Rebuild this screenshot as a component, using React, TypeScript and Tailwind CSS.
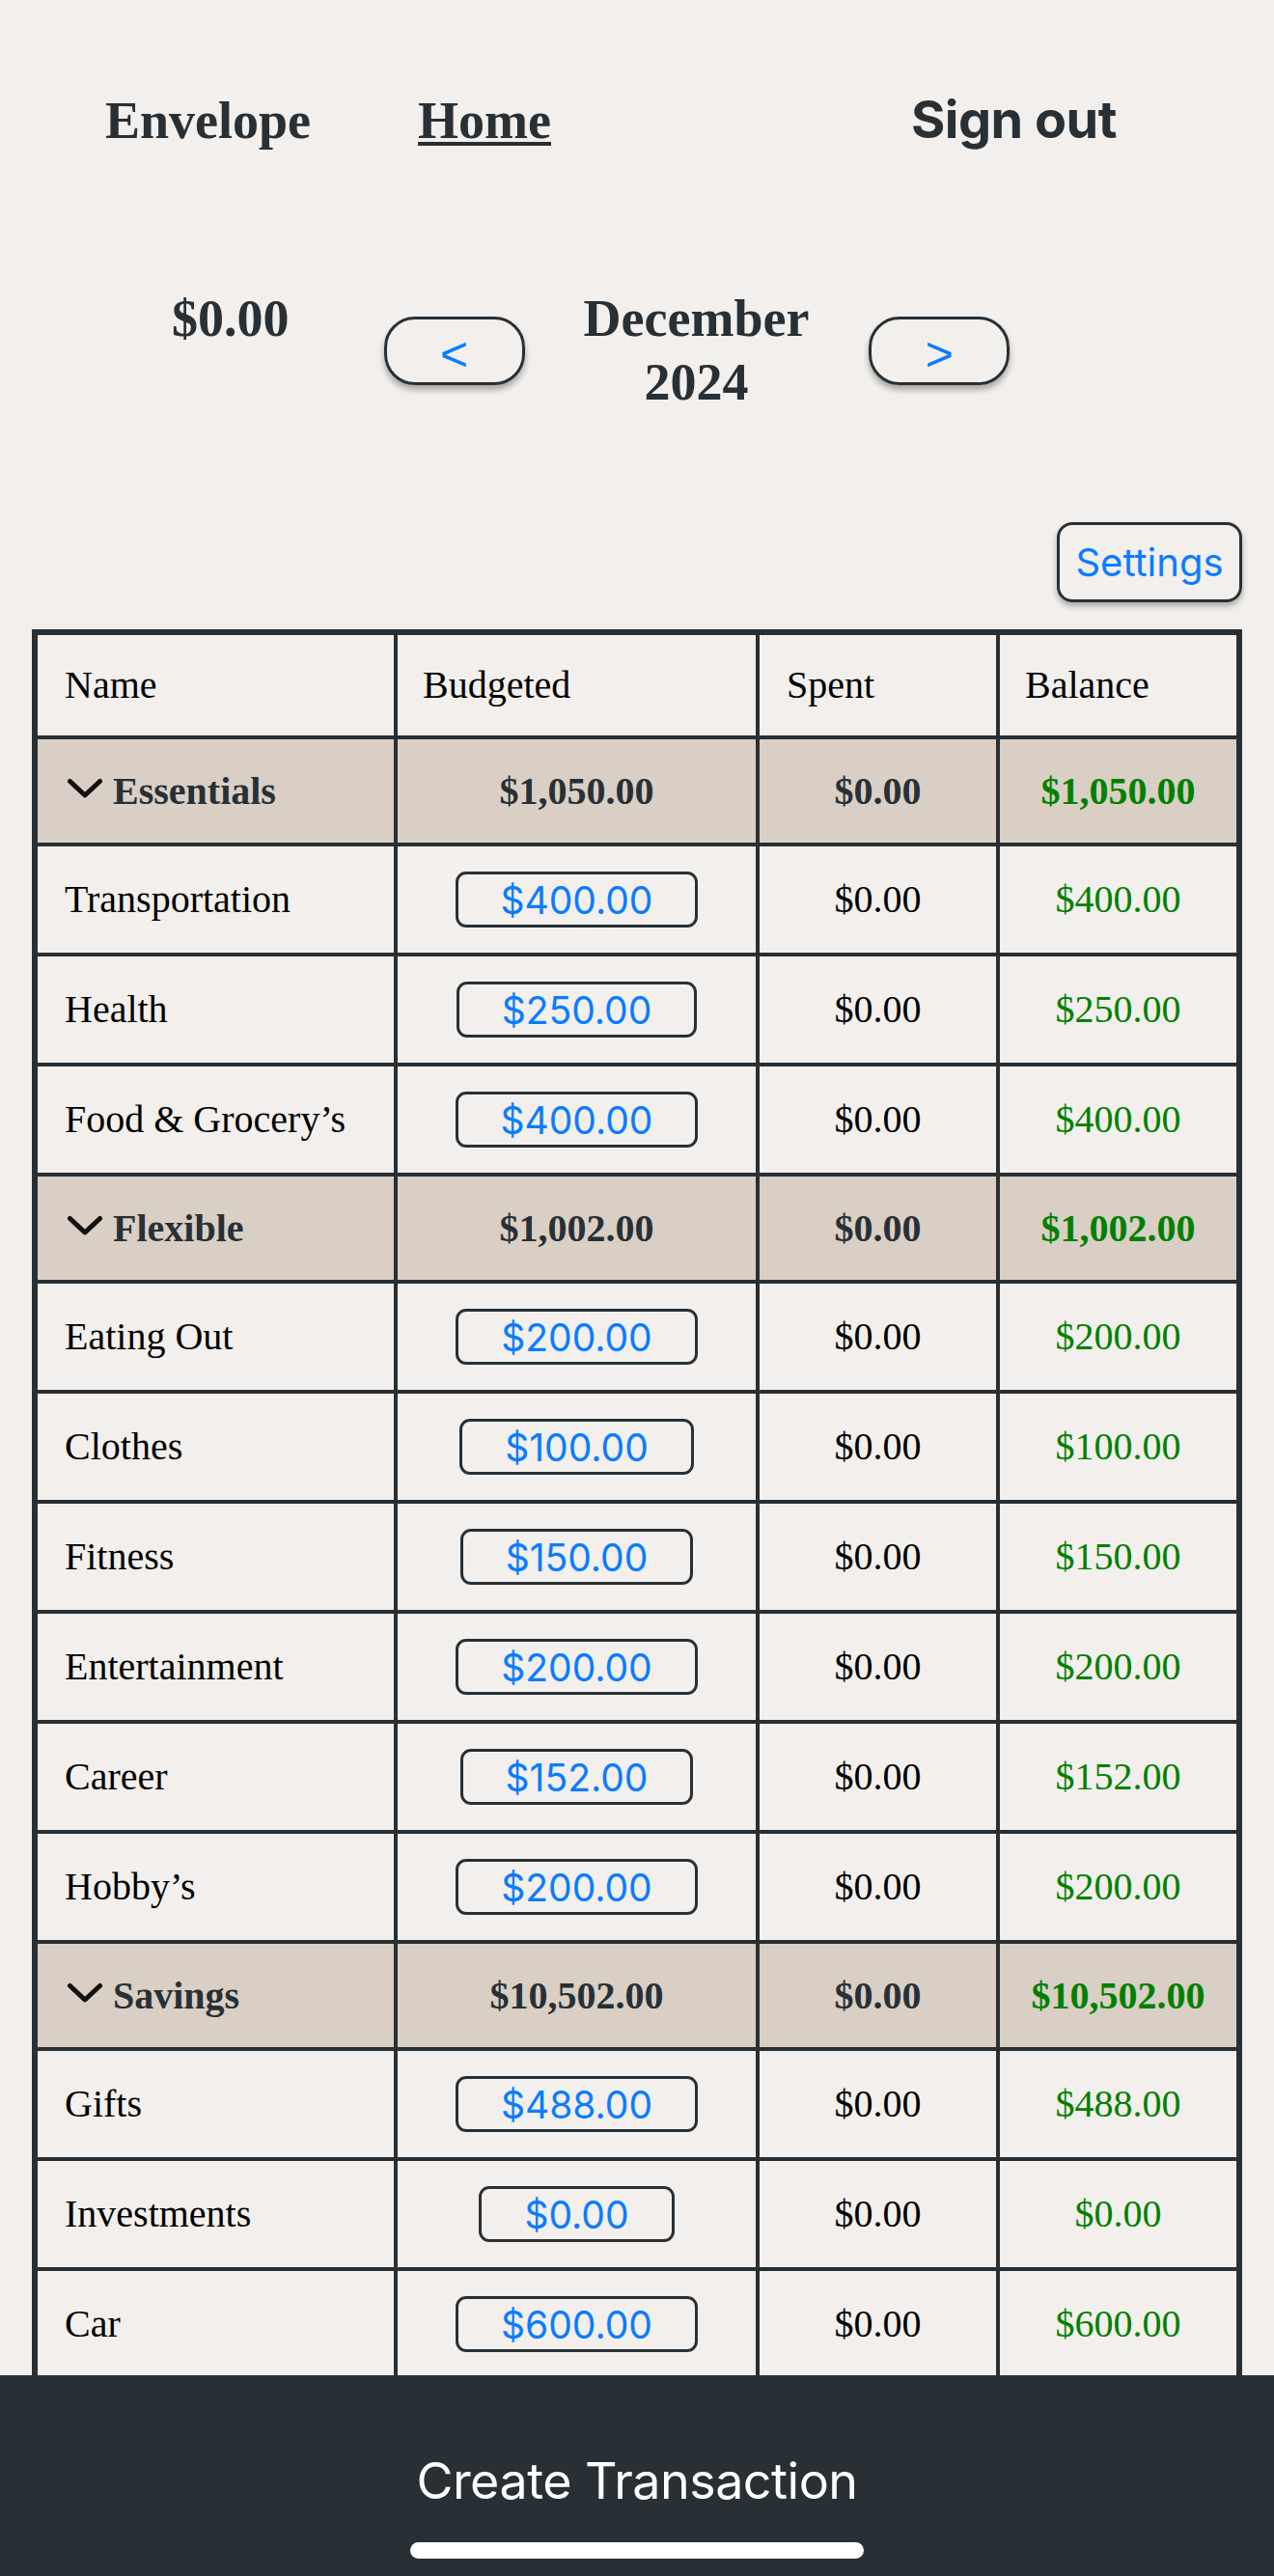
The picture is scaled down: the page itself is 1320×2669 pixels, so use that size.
import React from 'react';

type Item = { name: string; budgeted: string };
type Group = { name: string; budgeted: string; spent: string; balance: string; items: Item[] };

const groups: Group[] = [
    {
        name: 'Essentials', budgeted: '$1,050.00', spent: '$0.00', balance: '$1,050.00',
        items: [
            { name: 'Transportation', budgeted: '$400.00' },
            { name: 'Health', budgeted: '$250.00' },
            { name: 'Food & Grocery\u2019s', budgeted: '$400.00' },
        ],
    },
    {
        name: 'Flexible', budgeted: '$1,002.00', spent: '$0.00', balance: '$1,002.00',
        items: [
            { name: 'Eating Out', budgeted: '$200.00' },
            { name: 'Clothes', budgeted: '$100.00' },
            { name: 'Fitness', budgeted: '$150.00' },
            { name: 'Entertainment', budgeted: '$200.00' },
            { name: 'Career', budgeted: '$152.00' },
            { name: 'Hobby\u2019s', budgeted: '$200.00' },
        ],
    },
    {
        name: 'Savings', budgeted: '$10,502.00', spent: '$0.00', balance: '$10,502.00',
        items: [
            { name: 'Gifts', budgeted: '$488.00' },
            { name: 'Investments', budgeted: '$0.00' },
            { name: 'Car', budgeted: '$600.00' },
        ],
    },
];

const Chevron = () => (
    <svg width="38" height="22" viewBox="0 0 38 22" className="mr-[10px] shrink-0 -mt-[6px]">
        <path d="M3.5 3.5 L19 18 L34.5 3.5" fill="none" stroke="#111" strokeWidth="5" strokeLinecap="round" strokeLinejoin="round" />
    </svg>
);

const GroupRow: React.FC<{ group: Group }> = ({ group }) => (
    <>
        <div className="h-[107px] bg-[#dacfc4] flex items-center pl-[30px] font-bold text-[#283036]">
            <Chevron />
            {group.name}
        </div>
        <div className="h-[107px] bg-[#dacfc4] flex items-center justify-center font-bold text-[#283036]">{group.budgeted}</div>
        <div className="h-[107px] bg-[#dacfc4] flex items-center justify-center font-bold text-[#283036]">{group.spent}</div>
        <div className="h-[107px] bg-[#dacfc4] flex items-center justify-center font-bold text-[#008000]">{group.balance}</div>
    </>
);

const ItemRow: React.FC<{ item: Item }> = ({ item }) => (
    <>
        <div className="h-[110px] bg-[#f2efec] flex items-center pl-[28px] text-black">{item.name}</div>
        <div className="h-[110px] bg-[#f2efec] flex items-center justify-center">
            <span className="h-[58px] px-[44px] pt-[3px] border-[3px] border-[#283036] rounded-[11px] flex items-center font-['Inter',sans-serif] text-[39px] text-[#0a7cff]">
                {item.budgeted}
            </span>
        </div>
        <div className="h-[110px] bg-[#f2efec] flex items-center justify-center text-black">$0.00</div>
        <div className="h-[110px] bg-[#f2efec] flex items-center justify-center text-[#008000]">{item.budgeted}</div>
    </>
);

export default function App() {
    return (
        <div className="h-[2669px] flex flex-col overflow-hidden bg-[#f2efec] text-[#283036]">
            <div className="flex-1 min-h-0 overflow-hidden">
                <nav className="flex items-baseline pt-[97px] pl-[109px] pr-[163px] font-['Liberation_Serif',serif] font-bold text-[54px] leading-none">
                    <span>Envelope</span>
                    <span className="ml-[111px] underline decoration-[4px] underline-offset-[4px]">Home</span>
                    <span className="ml-auto font-['Inter',sans-serif] text-[54px] tracking-[-0.5px]">Sign out</span>
                </nav>

                <section className="flex items-start mt-[145px] pl-[178px] font-['Liberation_Serif',serif] font-bold text-[54px] leading-[66px]">
                    <span>$0.00</span>
                    <button className="self-center ml-[98px] w-[146px] h-[71px] pt-[8px] rounded-[32px] border-[3px] border-[#283036] shadow-[0_5px_6px_rgba(0,0,0,0.3)] font-['Liberation_Sans',sans-serif] font-normal text-[50px] leading-none text-[#0a7cff]">&lt;</button>
                    <div className="ml-[61px] text-center">
                        <div>December</div>
                        <div>2024</div>
                    </div>
                    <button className="self-center ml-[62px] w-[146px] h-[71px] pt-[8px] rounded-[32px] border-[3px] border-[#283036] shadow-[0_5px_6px_rgba(0,0,0,0.3)] font-['Liberation_Sans',sans-serif] font-normal text-[50px] leading-none text-[#0a7cff]">&gt;</button>
                </section>

                <div className="flex justify-end mt-[112px] pr-[33px]">
                    <button className="w-[192px] h-[83px] rounded-[16px] border-[3px] border-[#283036] shadow-[0_4px_6px_rgba(0,0,0,0.3)] font-['Inter',sans-serif] text-[40px] text-[#0a7cff]">Settings</button>
                </div>

                <div className="mx-[33px] mt-[28px] border-[6px] border-[#283036] bg-[#283036] grid grid-cols-[369px_371px_245px_245px] gap-[4px] font-['Liberation_Serif',serif] text-[40px]">
                    <div className="h-[104px] bg-[#f2efec] flex items-center pl-[28px] text-black">Name</div>
                    <div className="h-[104px] bg-[#f2efec] flex items-center pl-[26px] text-black">Budgeted</div>
                    <div className="h-[104px] bg-[#f2efec] flex items-center pl-[28px] text-black">Spent</div>
                    <div className="h-[104px] bg-[#f2efec] flex items-center pl-[26px] text-black">Balance</div>
                    {groups.map(group => (
                        <React.Fragment key={group.name}>
                            <GroupRow group={group} />
                            {group.items.map(item => <ItemRow key={item.name} item={item} />)}
                        </React.Fragment>
                    ))}
                </div>
            </div>

            <footer className="h-[208px] shrink-0 bg-[#283036] flex flex-col items-center pt-[84px] font-['Inter',sans-serif] text-white">
                <span className="text-[52px] leading-none tracking-[-0.5px]">Create Transaction</span>
                <span className="mt-[37px] w-[470px] h-[17px] rounded-full bg-white" />
            </footer>
        </div>
    );
}
